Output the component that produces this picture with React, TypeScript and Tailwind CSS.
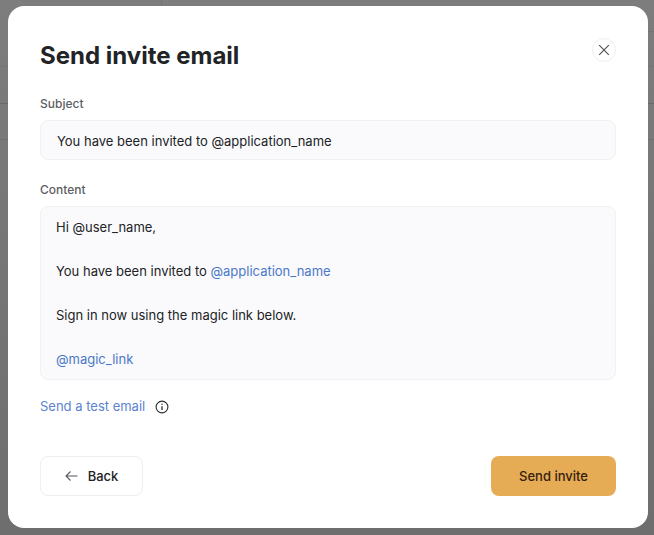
const font = { fontFamily: "Inter, sans-serif" };

export default function App() {
  return (
    <div style={font} className="relative w-[654px] h-[535px] bg-gradient-to-b from-[#7d7d7d] to-[#6e6e6e] overflow-hidden">
      <div className="flex flex-col">
        <div className="h-[32px] border-b border-[#747474] ml-[161px] border-l"></div>
        <div className="h-[35px] border-b border-[#767676]"></div>
        <div className="h-[37px] border-b border-[#6a6a6a]"></div>
        <div className="h-[36px] border-b border-[#707070]"></div>
      </div>
      <div className="absolute left-2 top-[6px] w-[640px] h-[522px] bg-white rounded-2xl pt-[30px] px-8 flex flex-col">
        <div className="flex items-start justify-between h-[39px]">
          <h1 className="text-2xl leading-[40px] font-bold text-[#212326]">Send invite email</h1>
          <button className="mt-[2px] w-6 h-6 rounded-full border border-[#eeeff1] flex items-center justify-center text-[#4b4d52]">
            <svg width="12" height="12" viewBox="0 0 12 12" fill="none" stroke="currentColor" strokeWidth="1.1"><path d="M1.2 1.2l9.6 9.6M10.8 1.2l-9.6 9.6" /></svg>
          </button>
        </div>
        <label className="mt-[20px] text-xs leading-[18px] font-medium text-[#5c5e63]">Subject</label>
        <div className="mt-[7px] h-10 rounded-lg border border-[#f0f1f3] bg-[#fafafc] pl-4 pt-[3px] flex items-center text-[13px] text-[#212326]">You have been invited to @application_name</div>
        <label className="mt-[21px] text-xs leading-[18px] font-medium text-[#5c5e63]">Content</label>
        <div className="mt-[7px] h-[174px] rounded-lg border border-[#f0f1f3] bg-[#fafafc] pl-[15px] pt-[9px] text-[13px] leading-[22px] text-[#212326]">
          <p>Hi @user_name,</p>
          <p className="mt-[22px]">You have been invited to <span className="text-[#4a78c9]">@application_name</span></p>
          <p className="mt-[22px]">Sign in now using the magic link below.</p>
          <p className="mt-[22px] text-[#4a78c9]">@magic_link</p>
        </div>
        <div className="mt-[17px] flex items-center gap-[10px] h-[20px]">
          <span className="text-[13px] text-[#5b83cf]">Send a test email</span>
          <svg width="14" height="14" viewBox="0 0 14 14" fill="none" stroke="#2b2d31" strokeWidth="1.1"><circle cx="7" cy="7" r="5.9" /><path d="M7 6.2v3.8" strokeWidth="1.3" /><circle cx="7" cy="4.3" r="0.7" fill="#2b2d31" stroke="none" /></svg>
        </div>
        <div className="mt-[39px] flex justify-between">
          <button className="w-[103px] h-10 rounded-lg border border-[#eeeff1] bg-white flex items-center justify-center gap-[10px] text-[13px] font-medium text-[#212326]">
            <svg width="13" height="12" viewBox="0 0 13 12" fill="none" stroke="#55575c" strokeWidth="1.1"><path d="M12.5 6H1M5.5 1.5L1 6 5.5 10.5" /></svg>
            <span className="pt-[2px]">Back</span>
          </button>
          <button className="w-[125px] h-10 rounded-lg bg-[#e5ab55] pt-[2px] text-[13px] font-medium text-[#35200f]">Send invite</button>
        </div>
      </div>
    </div>
  );
}
